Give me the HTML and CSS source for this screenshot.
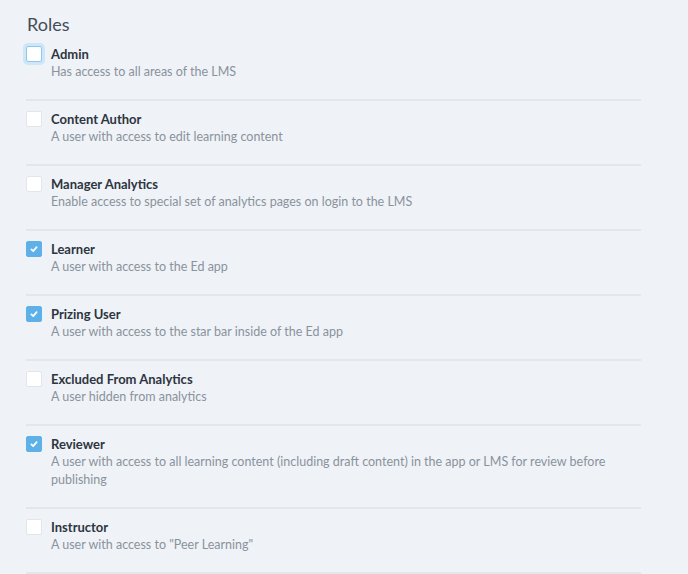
FILE: index.html
```html
<!DOCTYPE html>
<html>
<head>
<meta charset="utf-8">
<link rel="stylesheet" href="styles.css">
</head>
<body>
<div class="page">
  <h2 class="heading">Roles</h2>
  <ul class="roles">
    <li class="role">
      <span class="box focus"></span>
      <div class="text"><div class="name">Admin</div><div class="desc">Has access to all areas of the LMS</div></div>
    </li>
    <li class="role">
      <span class="box"></span>
      <div class="text"><div class="name">Content Author</div><div class="desc">A user with access to edit learning content</div></div>
    </li>
    <li class="role">
      <span class="box"></span>
      <div class="text"><div class="name">Manager Analytics</div><div class="desc">Enable access to special set of analytics pages on login to the LMS</div></div>
    </li>
    <li class="role">
      <span class="box checked"><svg viewBox="0 0 16 16" width="16" height="16"><path d="M5 8.4 L7.1 10.4 L11 5.8" fill="none" stroke="#fff" stroke-width="2" stroke-linecap="round" stroke-linejoin="round"/></svg></span>
      <div class="text"><div class="name">Learner</div><div class="desc">A user with access to the Ed app</div></div>
    </li>
    <li class="role">
      <span class="box checked"><svg viewBox="0 0 16 16" width="16" height="16"><path d="M5 8.4 L7.1 10.4 L11 5.8" fill="none" stroke="#fff" stroke-width="2" stroke-linecap="round" stroke-linejoin="round"/></svg></span>
      <div class="text"><div class="name">Prizing User</div><div class="desc">A user with access to the star bar inside of the Ed app</div></div>
    </li>
    <li class="role">
      <span class="box"></span>
      <div class="text"><div class="name">Excluded From Analytics</div><div class="desc">A user hidden from analytics</div></div>
    </li>
    <li class="role">
      <span class="box checked"><svg viewBox="0 0 16 16" width="16" height="16"><path d="M5 8.4 L7.1 10.4 L11 5.8" fill="none" stroke="#fff" stroke-width="2" stroke-linecap="round" stroke-linejoin="round"/></svg></span>
      <div class="text"><div class="name">Reviewer</div><div class="desc">A user with access to all learning content (including draft content) in the app or LMS for review before publishing</div></div>
    </li>
    <li class="role">
      <span class="box"></span>
      <div class="text"><div class="name">Instructor</div><div class="desc">A user with access to "Peer Learning"</div></div>
    </li>
  </ul>
</div>
</body>
</html>
```

FILE: styles.css
```css
html, body {
  margin: 0;
  padding: 0;
  background: #eff2f7;
}
body {
  font-family: "Lato", "Open Sans", sans-serif;
  color: #2f3944;
}
.page {
  width: 615px;
  padding: 13px 0 0 26px;
}
.heading {
  margin: 0 0 10px 1px;
  font-size: 18px;
  line-height: 22px;
  font-weight: 400;
  color: #434d58;
}
.roles {
  list-style: none;
  margin: 0;
  padding: 0;
}
.role {
  display: flex;
  align-items: flex-start;
  gap: 9px;
  padding: 9px 0 18px 0;
  border-bottom: 2px solid #e3e7ed;
}
.role:first-child {
  padding-top: 0;
}
.box {
  flex: none;
  width: 16px;
  height: 16px;
  margin-top: 1px;
  box-sizing: border-box;
  background: #fff;
  border: 1px solid #e2e6eb;
  border-radius: 2px;
  display: flex;
  align-items: center;
  justify-content: center;
}
.box.focus {
  border: 1px solid #8cc8f0;
  box-shadow: 0 0 0 3px #cfe6f8;
}
.box.checked {
  background: #5eb1e8;
  border-color: #5eb1e8;
}
.text {
  min-width: 0;
}
.name {
  font-size: 13px;
  line-height: 18px;
  font-weight: 700;
  color: #2d3540;
}
.desc {
  font-size: 12.5px;
  line-height: 18px;
  color: #8a929c;
}
```
